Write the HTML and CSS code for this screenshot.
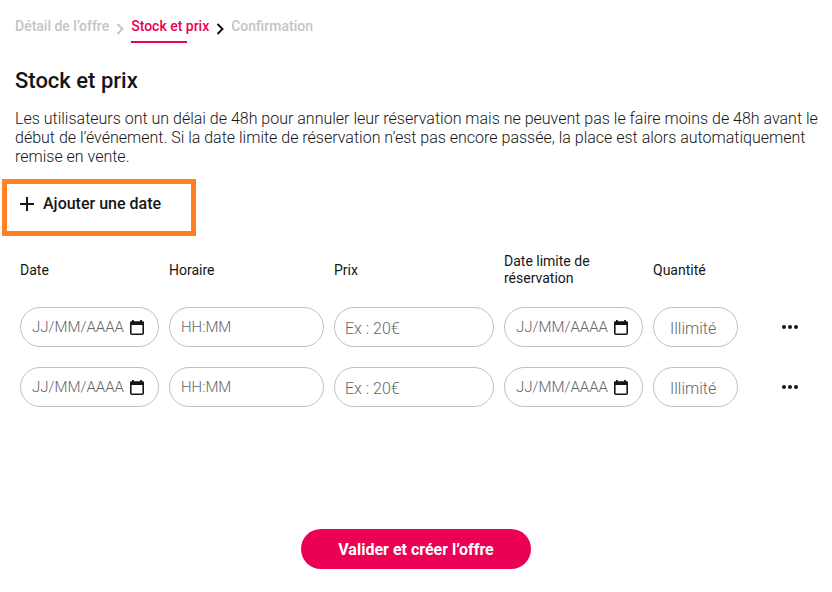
FILE: index.html
```html
<!DOCTYPE html>
<html lang="fr">
<head>
<meta charset="utf-8">
<title>Stock et prix</title>
<link rel="stylesheet" href="styles.css">
</head>
<body>
<svg class="defs" aria-hidden="true">
  <symbol id="calendar" viewBox="0 0 14 15"><path fill="none" stroke="currentColor" stroke-width="1.6" d="M.8 3h12.4v10.2a1 1 0 0 1-1 1H1.8a1 1 0 0 1-1-1z"/><path fill="currentColor" d="M1.4 1.2H2V0h1.8v1.2h6.4V0H12v1.2h.6A1.4 1.4 0 0 1 14 2.6V5H0V2.6a1.4 1.4 0 0 1 1.4-1.4z"/></symbol>
  <symbol id="dots" viewBox="0 0 16 4"><circle cx="2" cy="2" r="2"/><circle cx="8" cy="2" r="2"/><circle cx="14" cy="2" r="2"/></symbol>
</svg>
<main>
  <nav class="steps" aria-label="Étapes">
    <a class="step" href="#detail">Détail de l’offre</a>
    <svg class="chevron muted" viewBox="0 0 8 12" aria-hidden="true"><path d="M1.5 1 6.5 6 1.5 11"/></svg>
    <a class="step current" href="#stock">Stock et prix</a>
    <svg class="chevron" viewBox="0 0 8 12" aria-hidden="true"><path d="M1.5 1 6.5 6 1.5 11"/></svg>
    <a class="step" href="#confirmation">Confirmation</a>
  </nav>
  <h1>Stock et prix</h1>
  <p class="intro">Les utilisateurs ont un délai de 48h pour annuler leur réservation mais ne peuvent pas le faire moins de 48h avant le début de l’événement. Si la date limite de réservation n’est pas encore passée, la place est alors automatiquement remise en vente.</p>
  <div class="highlight">
    <button class="add" type="button">
      <svg viewBox="0 0 14 14" aria-hidden="true"><path d="M7 0v14M0 7h14"/></svg>
      Ajouter une date
    </button>
  </div>
  <form>
    <table>
      <colgroup><col class="c-date"><col class="c-time"><col class="c-price"><col class="c-date"><col class="c-qty"><col></colgroup>
      <thead>
        <tr><th id="h1">Date</th><th id="h2">Horaire</th><th id="h3">Prix</th><th id="h4">Date limite de réservation</th><th id="h5">Quantité</th><th></th></tr>
      </thead>
      <tbody>
        <tr>
          <td><div class="field date"><input aria-labelledby="h1" placeholder="JJ/MM/AAAA"><svg class="cal" aria-hidden="true"><use href="#calendar"/></svg></div></td>
          <td><div class="field"><input aria-labelledby="h2" placeholder="HH:MM"></div></td>
          <td><div class="field amount"><input aria-labelledby="h3" placeholder="Ex : 20€"></div></td>
          <td><div class="field date"><input aria-labelledby="h4" placeholder="JJ/MM/AAAA"><svg class="cal" aria-hidden="true"><use href="#calendar"/></svg></div></td>
          <td><div class="field amount qty"><input aria-labelledby="h5" placeholder="Illimité"></div></td>
          <td class="actions"><button class="more" type="button" aria-label="Actions"><svg aria-hidden="true"><use href="#dots"/></svg></button></td>
        </tr>
        <tr>
          <td><div class="field date"><input aria-labelledby="h1" placeholder="JJ/MM/AAAA"><svg class="cal" aria-hidden="true"><use href="#calendar"/></svg></div></td>
          <td><div class="field"><input aria-labelledby="h2" placeholder="HH:MM"></div></td>
          <td><div class="field amount"><input aria-labelledby="h3" placeholder="Ex : 20€"></div></td>
          <td><div class="field date"><input aria-labelledby="h4" placeholder="JJ/MM/AAAA"><svg class="cal" aria-hidden="true"><use href="#calendar"/></svg></div></td>
          <td><div class="field amount qty"><input aria-labelledby="h5" placeholder="Illimité"></div></td>
          <td class="actions"><button class="more" type="button" aria-label="Actions"><svg aria-hidden="true"><use href="#dots"/></svg></button></td>
        </tr>
      </tbody>
    </table>
    <button class="submit" type="submit">Valider et créer l’offre</button>
  </form>
</main>
</body>
</html>
```
FILE: styles.css
```css
* { box-sizing: border-box; }
body { margin: 0; background: #fff; color: #161617; font-family: Roboto, "Liberation Sans", sans-serif; font-size: 16px; }
main { padding: 15px 15px 23px; }
button, input { font: inherit; color: inherit; }
.defs { display: none; }
.steps { display: flex; align-items: flex-start; gap: 7px; height: 28px; font-size: 14px; font-weight: 500; line-height: 22px; }
.step { color: #c4c4c9; text-decoration: none; }
.step.current { position: relative; color: #eb0055; }
.step.current::after { content: ""; position: absolute; left: 0; bottom: -6px; width: 56px; height: 2px; background: #eb0055; }
.chevron { width: 8px; height: 12px; margin-top: 8px; fill: none; stroke: #161617; stroke-width: 2; }
.chevron.muted { stroke: #c4c4c9; }
h1 { margin: 24px 0 14px; font-size: 22px; font-weight: 500; line-height: 28px; }
.intro { margin: 0 -10px 0 0; font-weight: 300; line-height: 19px; }
.highlight { width: 194px; height: 57px; margin: 13px 0 0 -13px; padding: 9px 13px; border: 5px solid #ff8124; }
.add { display: flex; align-items: center; gap: 9px; padding: 0; border: 0; background: none; font-weight: 500; line-height: 22px; }
.add svg { width: 14px; height: 14px; stroke: currentColor; stroke-width: 2; }
table { width: 100%; table-layout: fixed; border-collapse: collapse; }
th, td { padding: 0 5px; text-align: left; font-weight: 400; }
.c-date { width: 149px; }
.c-time { width: 165px; }
.c-price { width: 170px; }
.c-qty { width: 95px; }
th { height: 61px; padding-top: 7px; font-size: 14px; line-height: 17px; }
td { height: 60px; }
.field { display: flex; align-items: center; height: 40px; padding: 0 14px 0 11px; border: 1px solid #c0c0c4; border-radius: 20px; font-size: 15px; font-weight: 300; }
.field.amount { padding: 2px 10px 0; font-size: 16px; }
.field.qty { padding-left: 16px; }
.field input { flex: 1; min-width: 0; width: 100%; padding: 0; border: 0; outline: 0; background: none; }
.field input::placeholder { color: #666; opacity: 1; }
.cal { width: 14px; height: 15px; }
.actions { padding-right: 10px; }
.more { display: block; padding: 8px; margin: 0 1px 0 auto; border: 0; background: none; }
.more svg { display: block; width: 16px; height: 4px; fill: currentColor; }
.submit { display: block; width: 230px; height: 40px; margin: 112px auto 0; border: 0; border-radius: 20px; background: #eb0055; color: #fff; font-weight: 700; }
```
